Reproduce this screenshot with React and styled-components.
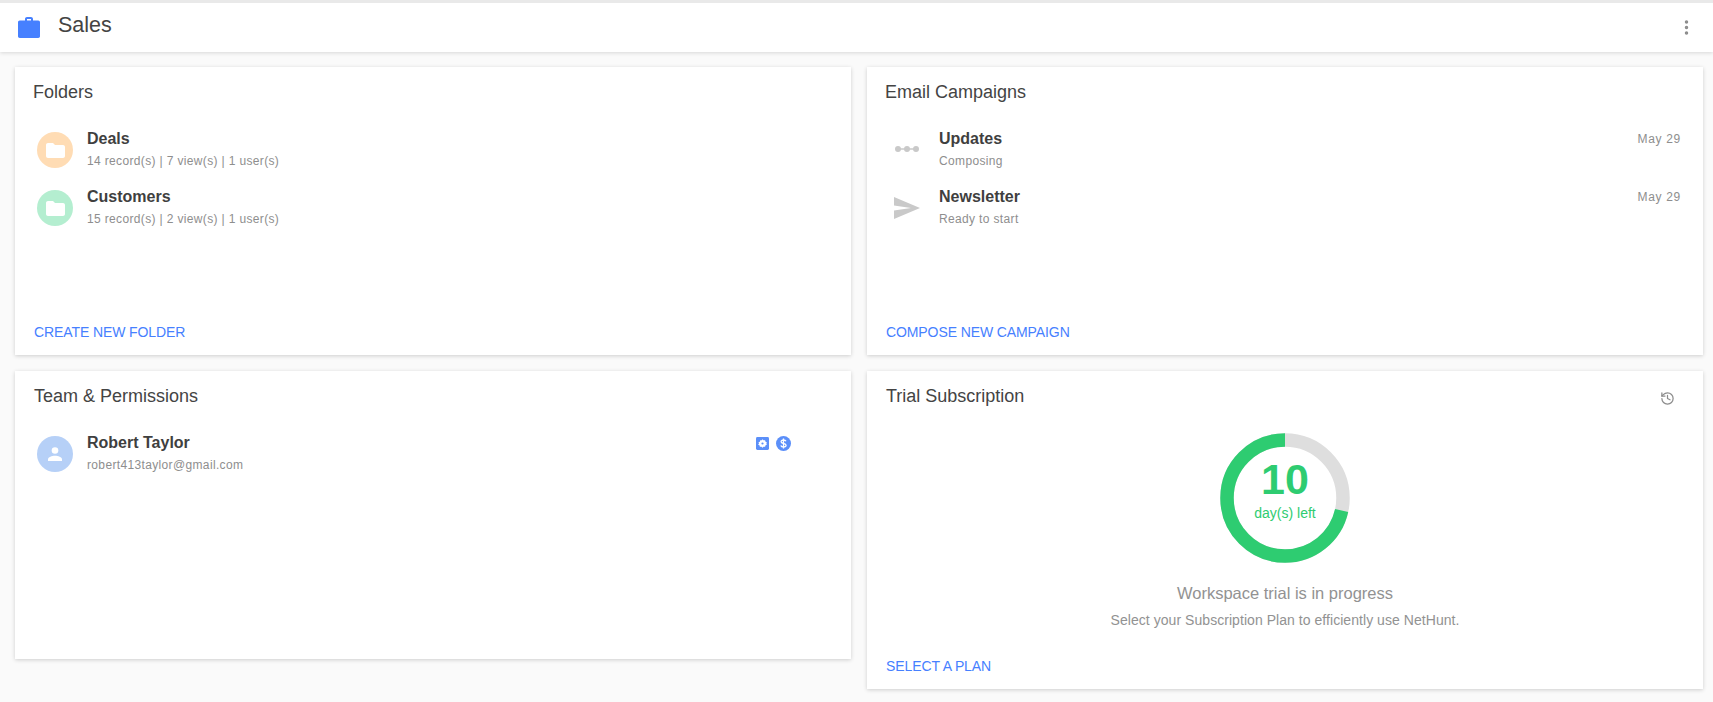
import React from "react";
import styled, { createGlobalStyle } from "styled-components";
import { History, MoreVertical } from "lucide-react";

const GlobalStyle = createGlobalStyle`
  html, body {
    margin: 0;
    padding: 0;
    background: #fafafa;
    font-family: "Liberation Sans", Arial, sans-serif;
    color: #3f3f3f;
  }
`;

const Page = styled.div`
  width: 1713px;
  height: 702px;
  overflow: hidden;
  border-top: 3px solid #e9e9e9;
  box-sizing: border-box;
`;

const Header = styled.header`
  display: flex;
  align-items: center;
  height: 49px;
  padding: 0 17px 0 18px;
  background: #fff;
  box-shadow: 0 1px 4px rgba(0, 0, 0, 0.14);
`;

const HeaderTitle = styled.h1`
  flex: 1;
  margin: 0 0 5px 18px;
  font-size: 21.5px;
  font-weight: 400;
  color: #444;
`;

const MenuButton = styled.div`
  display: flex;
  color: #8c8c8c;
`;

const HistoryButton = styled.div`
  display: flex;
  margin: 4px 10px 0 0;
  color: #8c8c8c;
`;

const Grid = styled.main`
  display: grid;
  grid-template-columns: 836px 836px;
  column-gap: 16px;
  row-gap: 16px;
  align-items: start;
  padding: 15px 0 0 15px;
`;

const Card = styled.section`
  display: flex;
  flex-direction: column;
  box-sizing: border-box;
  height: ${(p) => p.$height}px;
  padding: 14px 18px 15px 18px;
  background: #fff;
  box-shadow: 0 1px 4px rgba(0, 0, 0, 0.18);
`;

const CardHead = styled.div`
  display: flex;
  align-items: center;
  justify-content: space-between;
  height: 22px;
`;

const CardTitle = styled.h2`
  margin: 0 0 0 ${(p) => (p.$inset ? 1 : 0)}px;
  font-size: 18px;
  font-weight: 400;
  color: #444;
`;

const RowList = styled.div`
  display: flex;
  flex-direction: column;
  gap: 14px;
  margin-top: 26px;
  padding-left: 4px;
`;

const Row = styled.div`
  display: flex;
  align-items: flex-start;
  height: 44px;
`;

const Badge = styled.div`
  flex: none;
  display: flex;
  align-items: center;
  justify-content: center;
  width: 36px;
  height: 36px;
  margin: 3px 14px 0 0;
  border-radius: 50%;
  background: ${(p) => p.$color || "transparent"};
`;

const RowText = styled.div`
  flex: 1;
`;

const RowName = styled.div`
  font-size: 16px;
  font-weight: 700;
  line-height: 20px;
  color: #3f3f3f;
`;

const RowSub = styled.div`
  margin-top: 4px;
  font-size: 12px;
  line-height: 16px;
  letter-spacing: 0.35px;
  color: #8e8e8e;
`;

const RowDate = styled.div`
  margin: 2px 4px 0 0;
  font-size: 12px;
  line-height: 16px;
  letter-spacing: 0.7px;
  color: #8e8e8e;
`;

const RoleIcons = styled.div`
  display: flex;
  align-items: center;
  gap: 7px;
  margin: 3px 42px 0 0;
`;

const ActionLink = styled.a`
  margin-top: auto;
  padding-left: 1px;
  font-size: 14px;
  line-height: 16px;
  letter-spacing: -0.1px;
  color: #4680ff;
`;

const Trial = styled.div`
  display: flex;
  flex-direction: column;
  align-items: center;
  margin-top: 26px;
`;

const Donut = styled.div`
  position: relative;
  width: 130px;
  height: 130px;
`;

const DonutLabel = styled.div`
  position: absolute;
  inset: 0;
  display: flex;
  flex-direction: column;
  align-items: center;
  padding-top: 23px;
  box-sizing: border-box;
  color: #2ecc71;
`;

const DaysCount = styled.div`
  font-size: 43px;
  font-weight: 700;
  line-height: 46px;
`;

const DaysText = styled.div`
  margin-top: 2px;
  font-size: 14px;
  line-height: 18px;
`;

const TrialTitle = styled.div`
  margin-top: 19px;
  font-size: 16.5px;
  line-height: 22px;
  color: #929292;
`;

const TrialSub = styled.div`
  margin-top: 7px;
  font-size: 14px;
  line-height: 18px;
  letter-spacing: 0.05px;
  color: #929292;
`;

const CaseIcon = () => (
  <svg width="22" height="21" viewBox="0 0 22 21">
    <path
      fill="#4680ff"
      fillRule="evenodd"
      d="M7 3.500V2C7 .9 7.900 0 9 0h4c1.100 0 2 .9 2 2v1.500h5.300c.9 0 1.700.8 1.700 1.700v14.100c0 .9-.8 1.700-1.700 1.700H1.700C.8 21 0 20.200 0 19.300V5.200c0-.9.8-1.700 1.700-1.700H7zm2-1.500v1.500h4V2H9z"
    />
  </svg>
);

const FolderIcon = () => (
  <svg width="19" height="15" viewBox="0 0 19 15">
    <path
      fill="#fff"
      d="M2 0h5l2 2h8c1.100 0 2 .9 2 2v9c0 1.100-.9 2-2 2H2c-1.100 0-2-.9-2-2V2C0 .9.9 0 2 0z"
    />
  </svg>
);

const DraftIcon = () => (
  <svg width="26" height="10" viewBox="0 0 26 10">
    <path stroke="#c9c9c9" strokeWidth="1.500" d="M3 4h20" />
    <circle cx="4" cy="4" r="3" fill="#c9c9c9" />
    <circle cx="13" cy="4" r="3" fill="#c9c9c9" />
    <circle cx="22" cy="4" r="3" fill="#c9c9c9" />
  </svg>
);

const SendIcon = () => (
  <svg width="26" height="22" viewBox="0 0 26 22">
    <path fill="#c9c9c9" d="M0 0l26 11L0 22v-8.500L17 11 0 8.500z" />
  </svg>
);

const PersonIcon = () => (
  <svg width="16" height="16" viewBox="0 0 16 16">
    <circle cx="8" cy="4.500" r="3.300" fill="#fff" />
    <path fill="#fff" d="M1 13.500C1 11 5 9.800 8 9.800s7 1.200 7 3.700V15H1z" />
  </svg>
);

const AdminIcon = () => (
  <svg width="13" height="13" viewBox="0 0 14 14">
    <rect width="14" height="14" rx="1.500" fill="#5b8ff9" />
    <path
      fill="#fff"
      fillRule="evenodd"
      d="M7 2.300l1.100 1.300 1.700-.2.500 1.600 1.500.9-.7 1.100.7 1.100-1.500.9-.5 1.600-1.700-.2L7 11.700l-1.100-1.300-1.700.2-.5-1.600-1.500-.9L3.300 7l-.7-1.100 1.500-.9.500-1.600 1.700.2zM7 5.800a1.200 1.200 0 100 2.400 1.200 1.200 0 000-2.400z"
    />
  </svg>
);

const BillingIcon = () => (
  <svg width="15" height="15" viewBox="0 0 15 15">
    <circle cx="7.500" cy="7.500" r="7.500" fill="#5b8ff9" />
    <path
      fill="none"
      stroke="#fff"
      strokeWidth="1.300"
      d="M10 5.300C9.600 4.400 8.700 4 7.500 4 6.100 4 5.100 4.700 5.100 5.800c0 2.400 5 1 5 3.500 0 1.100-1.100 1.800-2.600 1.800-1.300 0-2.300-.5-2.700-1.500M7.500 2.500v10"
    />
  </svg>
);

// 10 of 14 days left, the arc runs counter-clockwise from the top
const DonutChart = ({ days, total }) => {
  const r = 58;
  const length = 2 * Math.PI * r;
  return (
    <svg width="130" height="130" viewBox="0 0 130 130">
      <circle cx="65" cy="65" r={r} fill="none" stroke="#dedede" strokeWidth="13.500" />
      <circle
        cx="65"
        cy="65"
        r={r}
        fill="none"
        stroke="#2ecc71"
        strokeWidth="13.500"
        strokeDasharray={`${(length * days) / total} ${length}`}
        transform="rotate(-90 65 65) scale(1 -1) translate(0 -130)"
      />
    </svg>
  );
};

const folders = [
  { name: "Deals", sub: "14 record(s) | 7 view(s) | 1 user(s)", color: "#ffdcb4" },
  { name: "Customers", sub: "15 record(s) | 2 view(s) | 1 user(s)", color: "#b4eed0" },
];

const campaigns = [
  { name: "Updates", sub: "Composing", date: "May 29", icon: <DraftIcon /> },
  { name: "Newsletter", sub: "Ready to start", date: "May 29", icon: <SendIcon /> },
];

export default function App() {
  return (
    <Page>
      <GlobalStyle />
      <Header>
        <CaseIcon />
        <HeaderTitle>Sales</HeaderTitle>
        <MenuButton>
          <MoreVertical size={19} strokeWidth={2.400} />
        </MenuButton>
      </Header>
      <Grid>
        <Card $height={288}>
          <CardHead>
            <CardTitle>Folders</CardTitle>
          </CardHead>
          <RowList>
            {folders.map((folder) => (
              <Row key={folder.name}>
                <Badge $color={folder.color}>
                  <FolderIcon />
                </Badge>
                <RowText>
                  <RowName>{folder.name}</RowName>
                  <RowSub>{folder.sub}</RowSub>
                </RowText>
              </Row>
            ))}
          </RowList>
          <ActionLink>CREATE NEW FOLDER</ActionLink>
        </Card>
        <Card $height={288}>
          <CardHead>
            <CardTitle>Email Campaigns</CardTitle>
          </CardHead>
          <RowList>
            {campaigns.map((campaign) => (
              <Row key={campaign.name}>
                <Badge>{campaign.icon}</Badge>
                <RowText>
                  <RowName>{campaign.name}</RowName>
                  <RowSub>{campaign.sub}</RowSub>
                </RowText>
                <RowDate>{campaign.date}</RowDate>
              </Row>
            ))}
          </RowList>
          <ActionLink>COMPOSE NEW CAMPAIGN</ActionLink>
        </Card>
        <Card $height={288}>
          <CardHead>
            <CardTitle $inset>Team &amp; Permissions</CardTitle>
          </CardHead>
          <RowList>
            <Row>
              <Badge $color="#b6d0f7">
                <PersonIcon />
              </Badge>
              <RowText>
                <RowName>Robert Taylor</RowName>
                <RowSub>robert413taylor@gmail.com</RowSub>
              </RowText>
              <RoleIcons>
                <AdminIcon />
                <BillingIcon />
              </RoleIcons>
            </Row>
          </RowList>
        </Card>
        <Card $height={318}>
          <CardHead>
            <CardTitle $inset>Trial Subscription</CardTitle>
            <HistoryButton>
              <History size={15} />
            </HistoryButton>
          </CardHead>
          <Trial>
            <Donut>
              <DonutChart days={10} total={14} />
              <DonutLabel>
                <DaysCount>10</DaysCount>
                <DaysText>day(s) left</DaysText>
              </DonutLabel>
            </Donut>
            <TrialTitle>Workspace trial is in progress</TrialTitle>
            <TrialSub>Select your Subscription Plan to efficiently use NetHunt.</TrialSub>
          </Trial>
          <ActionLink>SELECT A PLAN</ActionLink>
        </Card>
      </Grid>
    </Page>
  );
}
